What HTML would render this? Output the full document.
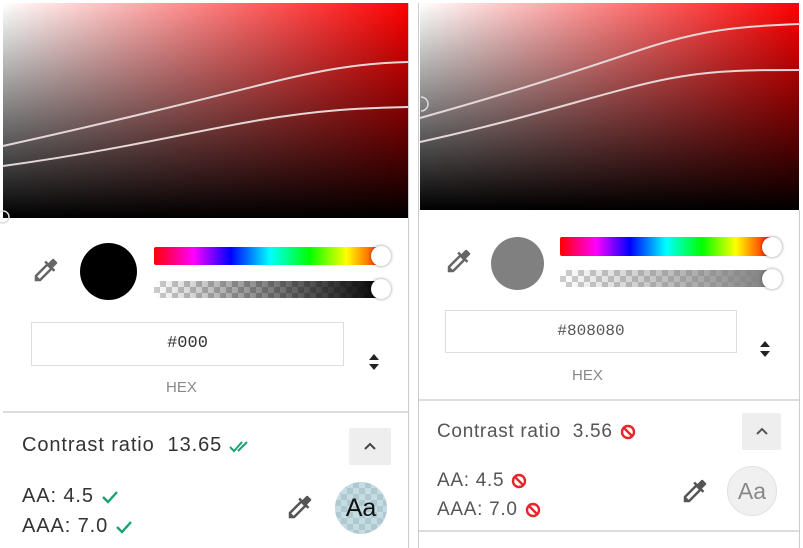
<!DOCTYPE html>
<html><head><style>
body{margin:0;width:803px;height:548px;background:#fff;position:relative;overflow:hidden;font-family:"Liberation Sans",sans-serif;}
.a{position:absolute;}
.grad{background:linear-gradient(to top,#000,rgba(0,0,0,0)),linear-gradient(to right,#fff,#f00);}
.hue{background:linear-gradient(to right,#f00,#f0f 17%,#00f 33%,#0ff 50%,#0f0 67%,#ff0 83%,#f00);border-radius:2px;}
.chk{background-color:#fff;background-image:linear-gradient(45deg,#ccc 25%,transparent 25%,transparent 75%,#ccc 75%),linear-gradient(45deg,#ccc 25%,transparent 25%,transparent 75%,#ccc 75%);background-size:12px 12px;background-position:0 0,6px 6px;}
.thumb{width:20px;height:20px;border-radius:50%;background:#fff;box-shadow:0 0 3px rgba(0,0,0,.45);}
.inp{border:1px solid #ddd;font-family:"Liberation Mono",monospace;color:#333;font-size:17px;text-align:center;box-sizing:border-box;}
.lbl{color:#888;font-size:15px;}
.txt{color:#333;font-size:20px;letter-spacing:0.9px;white-space:nowrap;display:flex;align-items:center;}
.r{color:#555;font-size:19px;letter-spacing:0.7px;}
.txt svg{margin-left:6px;}
.btn{background:#eee;border-radius:2px;}
</style></head><body>
<div class="a grad" style="left:3px;top:3px;width:405px;height:215px"></div>
<div class="a grad" style="left:420px;top:3px;width:379px;height:207px"></div>
<svg class="a" style="left:0;top:0" width="803" height="548">
<path d="M3 146 C120 120 200 100 260 85 S360 63 408 62" stroke="#e6d6d6" stroke-width="2" fill="none"/>
<path d="M3 166 C120 150 200 130 260 120 S360 108 408 107" stroke="#e6d6d6" stroke-width="2" fill="none"/>
<circle cx="3" cy="217" r="6" stroke="#ddd" stroke-width="1.5" fill="none"/>
<path d="M420 118 C520 90 580 70 640 50 S740 26 800 24" stroke="#e6d6d6" stroke-width="2" fill="none"/>
<path d="M420 142 C520 120 580 100 640 85 S740 70 800 70" stroke="#e6d6d6" stroke-width="2" fill="none"/>
<path d="M421 97 A7 7 0 0 1 421 111" stroke="#ddd" stroke-width="1.5" fill="none"/>
</svg>
<div class="a" style="left:408px;top:3px;width:1px;height:545px;background:#ccc"></div>
<div class="a" style="left:418px;top:3px;width:1px;height:545px;background:#ccc"></div>
<div class="a" style="left:799px;top:210px;width:1px;height:338px;background:#ccc"></div>

<svg class="a" style="left:31px;top:255px" width="30" height="30" viewBox="0 0 24 24"><path d="M20.7 5.6l-2.3-2.3c-.4-.4-1-.4-1.4 0l-3.1 3.1-1.9-1.9-1.4 1.4 1.4 1.4L3 16.3V21h4.7l9-9 1.4 1.4 1.4-1.4-1.9-1.9 3.1-3.1c.4-.4.4-1 0-1.4zM6.9 19L5 17.1l8.1-8.1 1.9 1.9L6.9 19z" fill="#666"/></svg>
<div class="a" style="left:80px;top:243px;width:57px;height:57px;border-radius:50%;background:#000"></div>
<div class="a hue" style="left:154px;top:247px;width:232px;height:18px"></div>
<div class="a thumb" style="left:371px;top:246px"></div>
<div class="a chk" style="left:154px;top:281px;width:232px;height:17px"><div style="width:100%;height:100%;background:linear-gradient(to right,rgba(0,0,0,0),#000)"></div></div>
<div class="a thumb" style="left:371px;top:279px"></div>
<div class="a inp" style="left:31px;top:322px;width:313px;height:44px;line-height:42px">#000</div>
<svg class="a" style="left:367px;top:350px" width="14" height="24"><path d="M2 10 L7 4 L12 10Z M2 14 L7 20 L12 14Z" fill="#222"/></svg>
<div class="a lbl" style="left:166px;top:379px">HEX</div>
<div class="a" style="left:3px;top:411px;width:405px;height:2px;background:#ddd"></div>
<div class="a txt" style="left:22px;top:434px">Contrast ratio&nbsp; 13.65<svg width="28" height="16"><path d="M2 9 L6 13 L14 4 M10 13 L19 4" stroke="#1aa176" stroke-width="2" fill="none"/></svg></div>
<div class="a btn" style="left:349px;top:428px;width:42px;height:37px"></div>
<svg class="a" style="left:362px;top:440px" width="16" height="12"><path d="M3 9 L8 4 L13 9" stroke="#444" stroke-width="2" fill="none"/></svg>
<div class="a txt" style="left:22px;top:485px">AA: 4.5<svg width="20" height="16"><path d="M3 8 L8 13 L17 3" stroke="#1aa176" stroke-width="2.4" fill="none"/></svg></div>
<div class="a txt" style="left:22px;top:515px">AAA: 7.0<svg width="20" height="16"><path d="M3 8 L8 13 L17 3" stroke="#1aa176" stroke-width="2.4" fill="none"/></svg></div>
<svg class="a" style="left:285px;top:492px" width="30" height="30" viewBox="0 0 24 24"><path d="M20.7 5.6l-2.3-2.3c-.4-.4-1-.4-1.4 0l-3.1 3.1-1.9-1.9-1.4 1.4 1.4 1.4L3 16.3V21h4.7l9-9 1.4 1.4 1.4-1.4-1.9-1.9 3.1-3.1c.4-.4.4-1 0-1.4zM6.9 19L5 17.1l8.1-8.1 1.9 1.9L6.9 19z" fill="#555"/></svg>
<div class="a" style="left:335px;top:482px;width:52px;height:52px;border-radius:50%;overflow:hidden;background-color:#c5dce3;background-image:linear-gradient(45deg,#b0c8cf 25%,transparent 25%,transparent 75%,#b0c8cf 75%),linear-gradient(45deg,#b0c8cf 25%,transparent 25%,transparent 75%,#b0c8cf 75%);background-size:12px 12px;background-position:0 0,6px 6px;text-align:center;line-height:52px;font-size:25px;color:#111">Aa</div>

<svg class="a" style="left:444px;top:246px" width="30" height="30" viewBox="0 0 24 24"><path d="M20.7 5.6l-2.3-2.3c-.4-.4-1-.4-1.4 0l-3.1 3.1-1.9-1.9-1.4 1.4 1.4 1.4L3 16.3V21h4.7l9-9 1.4 1.4 1.4-1.4-1.9-1.9 3.1-3.1c.4-.4.4-1 0-1.4zM6.9 19L5 17.1l8.1-8.1 1.9 1.9L6.9 19z" fill="#666"/></svg>
<div class="a" style="left:491px;top:237px;width:53px;height:53px;border-radius:50%;background:#808080"></div>
<div class="a hue" style="left:560px;top:237px;width:212px;height:19px"></div>
<div class="a thumb" style="left:762px;top:237px"></div>
<div class="a chk" style="left:560px;top:270px;width:212px;height:17px"><div style="width:100%;height:100%;background:linear-gradient(to right,rgba(128,128,128,0),#808080)"></div></div>
<div class="a thumb" style="left:762px;top:269px"></div>
<div class="a inp" style="left:445px;top:310px;width:292px;height:43px;line-height:41px;font-size:16px;color:#555">#808080</div>
<svg class="a" style="left:758px;top:337px" width="14" height="24"><path d="M2 10 L7 4 L12 10Z M2 14 L7 20 L12 14Z" fill="#222"/></svg>
<div class="a lbl" style="left:572px;top:367px">HEX</div>
<div class="a" style="left:419px;top:399px;width:380px;height:2px;background:#ddd"></div>
<div class="a txt r" style="left:437px;top:421px">Contrast ratio&nbsp; 3.56<svg width="18" height="18"><circle cx="9" cy="9" r="6" stroke="#e5262b" stroke-width="2.4" fill="none"/><path d="M5 5 L13 13" stroke="#e5262b" stroke-width="2.4"/></svg></div>
<div class="a btn" style="left:742px;top:413px;width:39px;height:37px"></div>
<svg class="a" style="left:754px;top:425px" width="16" height="12"><path d="M3 9 L8 4 L13 9" stroke="#555" stroke-width="2" fill="none"/></svg>
<div class="a txt r" style="left:437px;top:470px">AA: 4.5<svg width="18" height="18"><circle cx="9" cy="9" r="6" stroke="#e5262b" stroke-width="2.4" fill="none"/><path d="M5 5 L13 13" stroke="#e5262b" stroke-width="2.4"/></svg></div>
<div class="a txt r" style="left:437px;top:499px">AAA: 7.0<svg width="18" height="18"><circle cx="9" cy="9" r="6" stroke="#e5262b" stroke-width="2.4" fill="none"/><path d="M5 5 L13 13" stroke="#e5262b" stroke-width="2.4"/></svg></div>
<svg class="a" style="left:680px;top:476px" width="30" height="30" viewBox="0 0 24 24"><path d="M20.7 5.6l-2.3-2.3c-.4-.4-1-.4-1.4 0l-3.1 3.1-1.9-1.9-1.4 1.4 1.4 1.4L3 16.3V21h4.7l9-9 1.4 1.4 1.4-1.4-1.9-1.9 3.1-3.1c.4-.4.4-1 0-1.4zM6.9 19L5 17.1l8.1-8.1 1.9 1.9L6.9 19z" fill="#555"/></svg>
<div class="a" style="left:727px;top:466px;width:48px;height:48px;border-radius:50%;background:#f0f0f0;border:1px solid #e0e0e0;text-align:center;line-height:48px;font-size:23px;color:#888">Aa</div>
<div class="a" style="left:419px;top:530px;width:380px;height:2px;background:#ddd"></div>
</body></html>
